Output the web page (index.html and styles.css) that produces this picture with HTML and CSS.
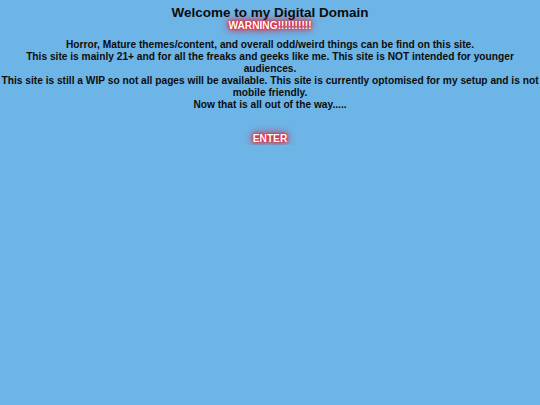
FILE: index.html
```html
<!DOCTYPE html>
<html>
<head>
<meta charset="utf-8">
<link rel="stylesheet" href="styles.css">
</head>
<body>
<main class="page">
  <h1 class="title">Welcome to my Digital Domain</h1>
  <div class="warning glow">WARNING!!!!!!!!!!</div>
  <div class="notice">
    <p>Horror, Mature themes/content, and overall odd/weird things can be find on this site.</p>
    <p>This site is mainly 21+ and for all the freaks and geeks like me. This site is NOT intended for younger audiences.</p>
    <p>This site is still a WIP so not all pages will be available. This site is currently optomised for my setup and is not mobile friendly.</p>
    <p>Now that is all out of the way.....</p>
  </div>
  <a class="enter glow" href="#">ENTER</a>
</main>
</body>
</html>
```
FILE: styles.css
```css
html, body {
  margin: 0;
  padding: 0;
  background: #6db5e7;
}
.page {
  display: flex;
  flex-direction: column;
  align-items: center;
  text-align: center;
  font-family: "Liberation Sans", Arial, sans-serif;
  font-weight: bold;
  color: #0d0d0d;
  padding: 5px 0 0;
}
.title {
  margin: 0;
  font-size: 13.5px;
  line-height: 15px;
}
.warning {
  font-size: 10.2px;
  line-height: 12px;
  margin-bottom: 7px;
}
.glow {
  color: #fff;
  text-shadow: 0 0 1px #ff0010, 0 0 3px #ff0818, 0 0 6px #ff1020, 0 0 10px #e01830;
}
.notice {
  font-size: 10.2px;
  line-height: 12px;
  margin-bottom: 22px;
}
.notice p {
  margin: 0;
}
.enter {
  font-size: 10.2px;
  line-height: 12px;
  text-decoration: none;
}
```
